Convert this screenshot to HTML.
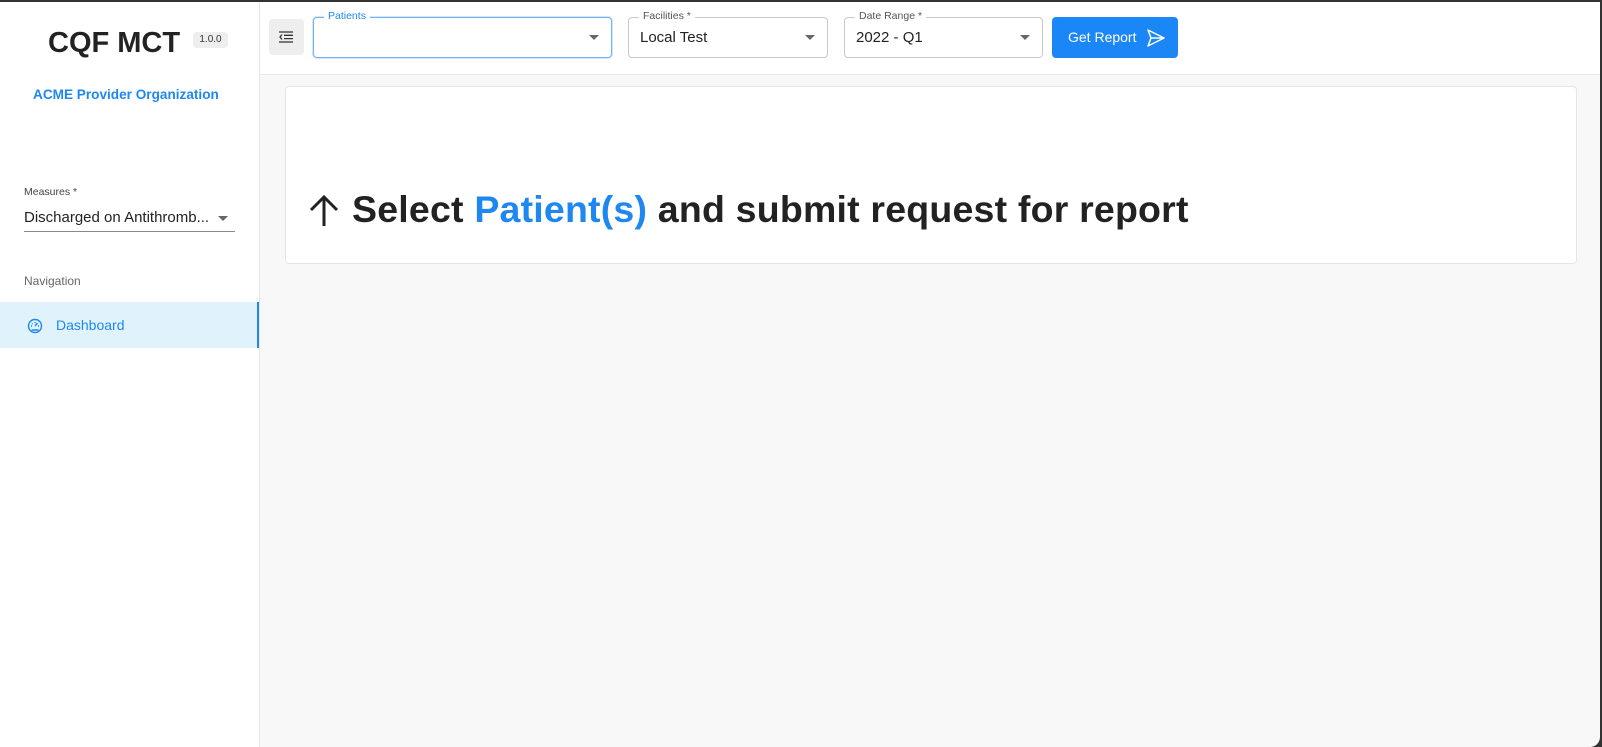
<!DOCTYPE html>
<html><head><meta charset="utf-8"><style>
*{box-sizing:border-box;margin:0;padding:0}
body{width:1602px;height:747px;overflow:hidden;background:#333;font-family:"Liberation Sans",sans-serif;position:relative}
.frame{position:absolute;left:0;top:2px;width:1600px;height:745px;background:#f8f8f8;border-radius:0 0 10px 0;overflow:hidden}
.side{position:absolute;left:0;top:0;width:260px;height:745px;background:#fff;border-right:1px solid #e6e6e6}
.top{position:absolute;left:260px;top:0;right:0;height:73px;background:#fff;border-bottom:1px solid #e8e8e8}
.abs{position:absolute}
.field{position:absolute;top:15px;height:41px;border:1px solid #c9c9c9;border-radius:4px;background:#fff}
.field .lbl{position:absolute;top:-8px;left:10px;background:#fff;padding:0 4px;font-size:10.5px;color:#555}
.field .val{position:absolute;left:11px;top:11px;font-size:15px;color:#222}
.caret{position:absolute;right:12px;top:17px;width:0;height:0;border-left:5px solid transparent;border-right:5px solid transparent;border-top:5px solid #666}
</style></head><body>
<div class="frame">
<div class="side">
  <div class="abs" style="left:48px;top:25px;font-size:29px;font-weight:bold;color:#222">CQF MCT</div>
  <div class="abs" style="left:193px;top:30px;width:35px;height:16px;background:#eee;border-radius:4px;font-size:10px;color:#333;text-align:center;line-height:16px">1.0.0</div>
  <div class="abs" style="left:33px;top:85px;font-size:13.6px;font-weight:bold;color:#1e88f0;white-space:nowrap">ACME Provider Organization</div>
  <div class="abs" style="left:24px;top:184px;font-size:10.5px;color:#444">Measures *</div>
  <div class="abs" style="left:24px;top:207px;font-size:15px;color:#222;white-space:nowrap">Discharged on Antithromb...</div>
  <div class="abs" style="left:218px;top:214px;width:0;height:0;border-left:5px solid transparent;border-right:5px solid transparent;border-top:5px solid #666"></div>
  <div class="abs" style="left:24px;top:229px;width:211px;height:1px;background:#888"></div>
  <div class="abs" style="left:24px;top:272px;font-size:12px;color:#666">Navigation</div>
  <div class="abs" style="left:0;top:300px;width:259px;height:46px;background:#e0f3fc;border-right:2px solid #1e88f0"></div>
  <svg class="abs" style="left:27px;top:316px" width="16" height="16" viewBox="0 0 16 16" fill="none" stroke="#1e88f0" stroke-width="1.4"><circle cx="8" cy="8" r="6.5"/><path d="M8 8l2.5-3M4 8h1M11 8h1M8 4v1M5 5.5l.6.6M4.5 12h7"/></svg>
  <div class="abs" style="left:56px;top:315px;font-size:14px;color:#1e88f0">Dashboard</div>
</div>
<div class="top">
  <div class="abs" style="left:9px;top:17px;width:35px;height:36px;background:#eee;border-radius:4px"></div>
  <svg class="abs" style="left:18px;top:27px" width="16" height="16" viewBox="0 0 16 16" stroke="#333" stroke-width="1.3" fill="none"><path d="M1 3h14M6 6.3h9M6 9.6h9M1 13h14M4 5.5L2 8l2 2.5"/></svg>
  <div class="field" style="left:53px;width:299px;border:1.5px solid #6fb4f7;box-shadow:0 0 0 1px #d3e8fc"><div class="lbl" style="color:#1e88f0">Patients</div><div class="caret"></div></div>
  <div class="field" style="left:368px;width:200px"><div class="lbl">Facilities *</div><div class="val">Local Test</div><div class="caret"></div></div>
  <div class="field" style="left:584px;width:199px"><div class="lbl">Date Range *</div><div class="val">2022 - Q1</div><div class="caret"></div></div>
  <div class="abs" style="left:792px;top:15px;width:126px;height:41px;background:#1b86f5;border-radius:4px;color:#fff;font-size:14px;line-height:41px;padding-left:16px">Get Report</div>
  <svg class="abs" style="left:886px;top:26px" width="20" height="20" viewBox="0 0 20 20" fill="none" stroke="#fff" stroke-width="1.5" stroke-linejoin="round"><path d="M2 2l16 8-16 8 3-8zM5 10h13"/></svg>
</div>
<div class="abs" style="left:285px;top:84px;width:1292px;height:178px;background:#fff;border:1px solid #e6e6e6;border-radius:4px"></div>
<svg class="abs" style="left:307px;top:192px" width="34" height="34" viewBox="0 0 34 34" fill="none" stroke="#222" stroke-width="3"><path d="M17 32V3M4 16L17 3l13 13"/></svg>
<div class="abs" style="left:352px;top:186px;font-size:37.5px;font-weight:bold;color:#222;white-space:nowrap;letter-spacing:0.2px">Select <span style="color:#1e88f0">Patient(s)</span> and submit request for report</div>
</div>
</body></html>
